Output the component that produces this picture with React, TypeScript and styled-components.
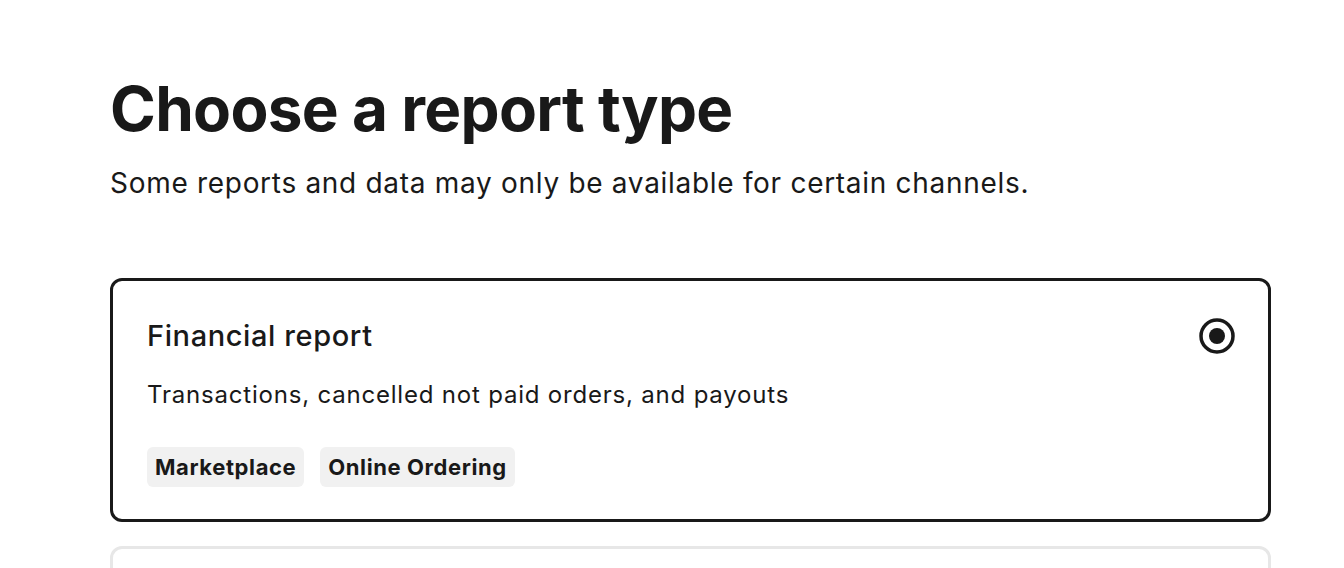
import styled, { createGlobalStyle } from "styled-components";

const GlobalStyle = createGlobalStyle`
    body {
        margin: 0;
        background: #ffffff;
        color: #191919;
        font-family: "Inter", "Noto Sans", sans-serif;
    }
`;

interface Report {
    title: string;
    description: string;
    tags: string[];
}

const reports: Report[] = [
    {
        title: "Financial report",
        description: "Transactions, cancelled not paid orders, and payouts",
        tags: ["Marketplace", "Online Ordering"],
    },
    {
        title: "Sales report",
        description: "Sales, orders, and item performance by store",
        tags: ["Marketplace"],
    },
];

const Radio = ({ checked }: { checked: boolean }) => (
    <svg width="38" height="38" viewBox="0 0 38 38">
        <circle cx="19" cy="19" r="16" fill="none" stroke={checked ? "#191919" : "#bdbdbd"} strokeWidth="3.5" />
        {checked && <circle cx="19" cy="19" r="8" fill="#191919" />}
    </svg>
);

const App = () => {
    return (
        <Page>
            <GlobalStyle />
            <Title>Choose a report type</Title>
            <Subtitle>Some reports and data may only be available for certain channels.</Subtitle>
            <List>
                {reports.map((r, i) => (
                    <Card key={r.title} $selected={i === 0}>
                        <CardHead>
                            <CardTitle>{r.title}</CardTitle>
                            <Radio checked={i === 0} />
                        </CardHead>
                        <Description>{r.description}</Description>
                        <Tags>
                            {r.tags.map((t) => (
                                <Tag key={t}>{t}</Tag>
                            ))}
                        </Tags>
                    </Card>
                ))}
            </List>
        </Page>
    );
};

const Page = styled.main`
    padding: 72px 73px 40px 110px;
`;

const Title = styled.h1`
    margin: 0;
    font-size: 62px;
    font-weight: 700;
    line-height: 74px;
    letter-spacing: -0.7px;
`;

const Subtitle = styled.p`
    margin: 19px 0 0;
    font-size: 28px;
    font-weight: 400;
    line-height: 36px;
    letter-spacing: 0.7px;
`;

const List = styled.div`
    display: flex;
    flex-direction: column;
    gap: 24px;
    margin-top: 77px;
`;

const Card = styled.div<{ $selected: boolean }>`
    border: 3px solid ${(p) => (p.$selected ? "#191919" : "#e7e7e7")};
    border-radius: 12px;
    padding: 36px 32px 32px 34px;
    display: flex;
    flex-direction: column;
`;

const CardHead = styled.div`
    display: flex;
    align-items: center;
    justify-content: space-between;
`;

const CardTitle = styled.h2`
    margin: 0;
    font-size: 29px;
    font-weight: 500;
    line-height: 38px;
    letter-spacing: 0.6px;
`;

const Description = styled.p`
    margin: 24px 0 0;
    font-size: 24px;
    line-height: 32px;
    letter-spacing: 0.8px;
`;

const Tags = styled.div`
    display: flex;
    gap: 16px;
    margin-top: 36px;
`;

const Tag = styled.span`
    background: #f1f1f1;
    border-radius: 6px;
    padding: 0 8px;
    height: 40px;
    display: inline-flex;
    align-items: center;
    font-size: 22px;
    font-weight: 700;
    letter-spacing: 0.6px;
`;

export default App;
